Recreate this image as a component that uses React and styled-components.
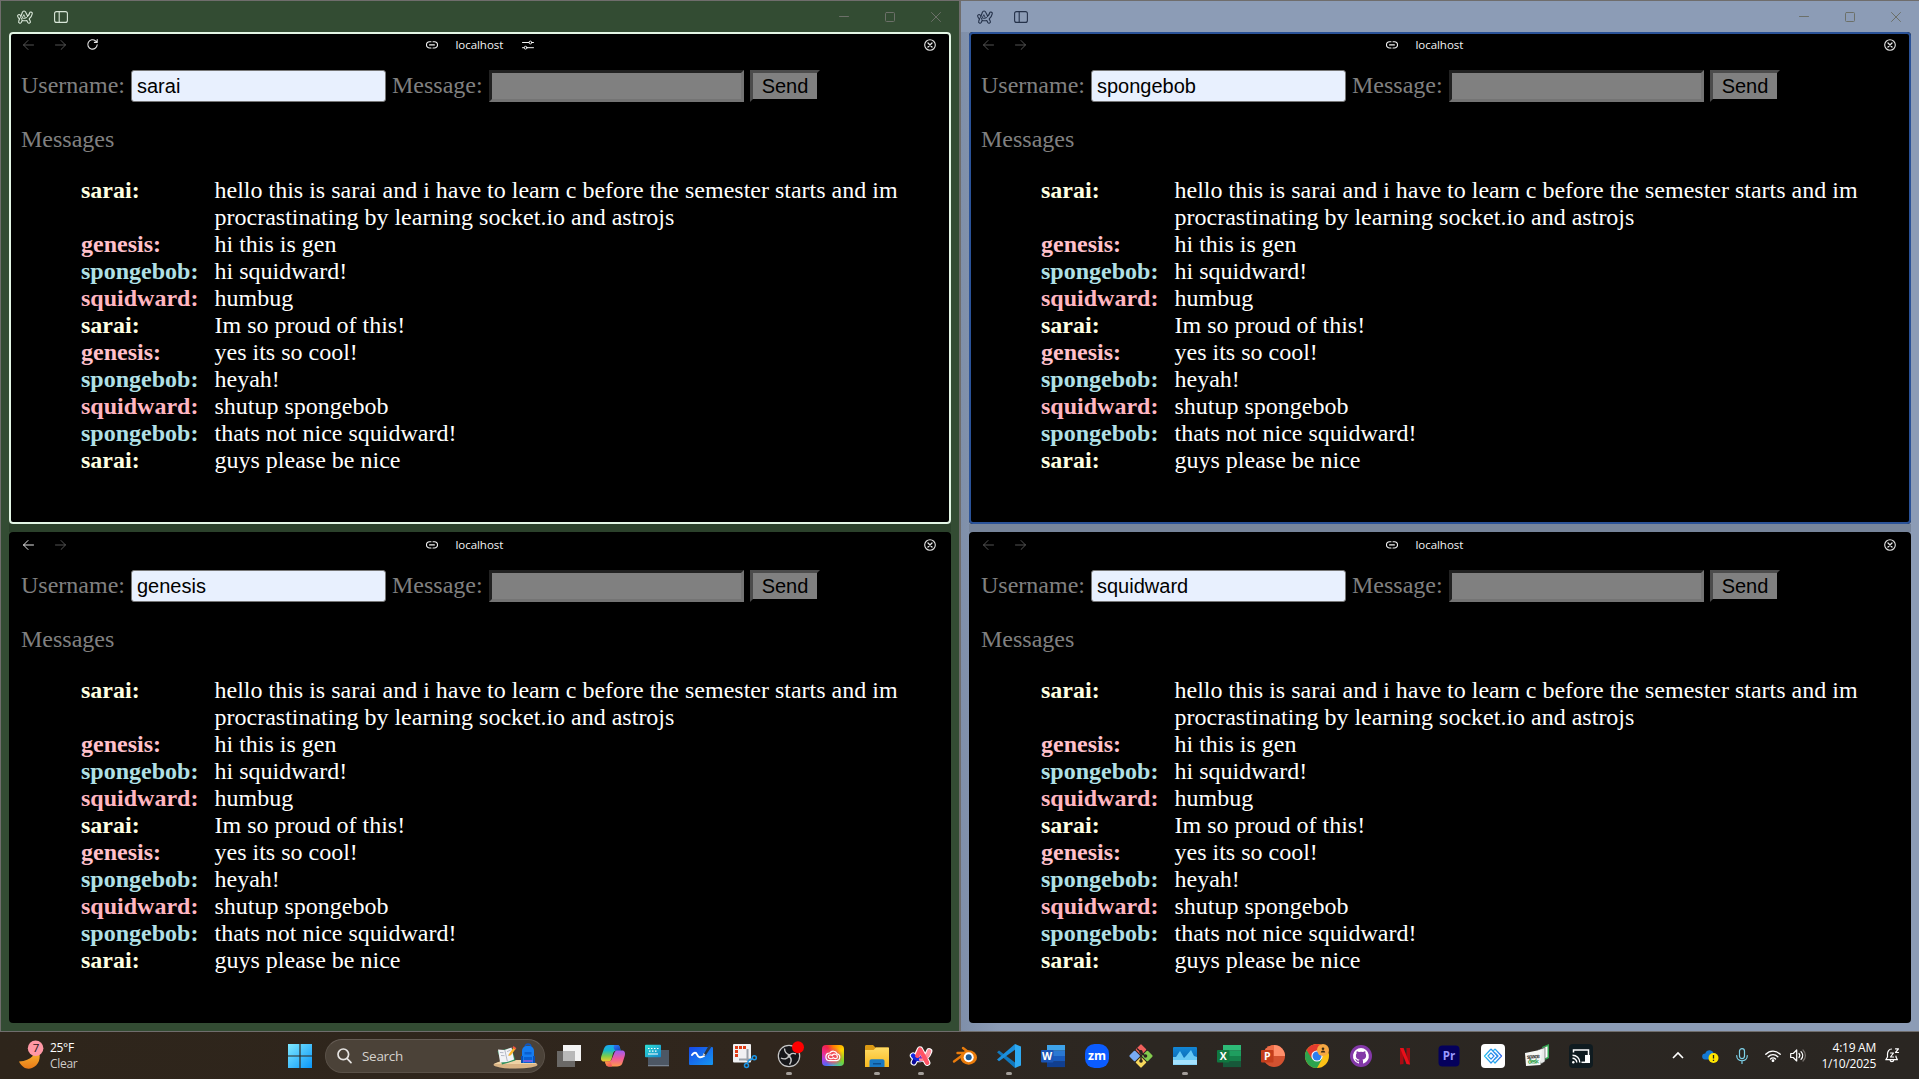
import React from "react";
import styled, { createGlobalStyle } from "styled-components";

const GlobalStyle = createGlobalStyle`
  * { box-sizing: border-box; }
  html, body { margin: 0; padding: 0; background: #000; overflow: hidden; }
  svg { display: block; flex: none; overflow: visible; }
`;

const uiFont = `"Open Sans", "Noto Sans", sans-serif`;
const serif = `"Liberation Serif", "Times New Roman", serif`;
const sans = `"Liberation Sans", Arial, sans-serif`;

const Desktop = styled.div`
  width: 1919px;
  height: 1079px;
  display: flex;
  flex-direction: column;
  background: #000;
`;

const Windows = styled.div`
  display: grid;
  grid-template-columns: 960px 959px;
  height: 1032px;
`;

const BrowserWindow = styled.section`
  display: flex;
  flex-direction: column;
  background: ${(p) => p.$bg};
  border: 1px solid #6f6d6c;
  border-right-width: ${(p) => (p.$flush ? 0 : 1)}px;
`;

const TitleBar = styled.header`
  height: 31px;
  flex: none;
  display: flex;
  align-items: center;
  padding-left: 16px;
  gap: 21px;
  color: ${(p) => p.$color};
`;

const WindowControls = styled.div`
  margin-left: auto;
  display: flex;
  color: #6c7069;
`;

const ControlButton = styled.span`
  width: 46px;
  height: 30px;
  display: flex;
  align-items: center;
  justify-content: center;
`;

const PaneStack = styled.div`
  flex: 1;
  display: grid;
  grid-template-rows: 492px 491px;
  row-gap: 8px;
  padding: 0 8px 8px;
  background: linear-gradient(${(p) => p.$gap}, ${(p) => p.$gap}) 8px 492px / 942px 8px no-repeat,
    ${(p) => p.$edge};
`;

const PaneFrame = styled.article`
  display: flex;
  flex-direction: column;
  background: #000;
  border-radius: 4px;
  box-shadow: ${(p) => (p.$outline ? `inset 0 0 0 2px ${p.$outline}` : "none")};
`;

const PaneBar = styled.div`
  height: 25px;
  flex: none;
  display: grid;
  grid-template-columns: 1fr auto 1fr;
  align-items: center;
  padding: 0 15px 0 14px;
  color: #e4e4e4;
`;

const NavGroup = styled.div`
  display: flex;
  align-items: center;
  gap: 21px;
`;

const NavIcon = styled.span`
  width: 11px;
  display: flex;
  justify-content: center;
  opacity: ${(p) => (p.$dim ? 0.36 : 1)};
`;

const Address = styled.div`
  display: flex;
  align-items: center;
  gap: 18px;
  width: 108px;
  font: 11.5px/16px ${uiFont};
  color: #f4f4f4;
`;

const Host = styled.span`
  width: 48px;
  white-space: nowrap;
  letter-spacing: -0.05px;
`;

const BarEnd = styled.div`
  display: flex;
  justify-content: flex-end;
`;

const Page = styled.main`
  padding: 13px 12px 0;
  font: 24px/27px ${serif};
  color: #808080;
`;

const Form = styled.div`
  display: flex;
  align-items: center;
  height: 32px;
`;

const Label = styled.label`
  width: ${(p) => p.$w}px;
  padding-bottom: 1px;
  white-space: nowrap;
`;

const NameInput = styled.input`
  width: 255px;
  height: 32px;
  margin: 0 6px 0 0;
  padding: 0 5px;
  border: 1px solid #767676;
  border-radius: 3px;
  outline: none;
  background: #e8f0fe;
  color: #000;
  font: 20px ${sans};
`;

const MessageInput = styled.input`
  width: 255px;
  height: 32px;
  margin: 0 6px 0 0;
  padding: 0 3px;
  border: 3px solid;
  border-color: #222 #747474 #747474 #222;
  outline: none;
  background: #808080;
`;

const SendButton = styled.button`
  width: 70px;
  height: 32px;
  padding: 0;
  border: 3px solid;
  border-color: #4c4c4c #000 #000 #4c4c4c;
  background: #808080;
  color: #000;
  font: 20px ${sans};
`;

const Heading = styled.p`
  margin: 24px 0;
`;

const Log = styled.dl`
  margin: 0 0 0 60px;
  width: 840px;
  display: grid;
  grid-template-columns: 133.5px 1fr;
  grid-auto-rows: auto;
`;

const Author = styled.dt`
  font-weight: bold;
  color: ${(p) => p.$color};
`;

const Message = styled.dd`
  margin: 0;
  width: 690px;
  color: #fff;
`;

/* Taskbar */

const Taskbar = styled.footer`
  height: 47px;
  display: flex;
  align-items: center;
  background: linear-gradient(90deg, #2e251b 0%, #30261d 40%, #2c2722 60%, #2a2622 100%);
  font: 12px/16px ${uiFont};
  color: #fff;
`;

const Weather = styled.div`
  width: 267px;
  padding-left: 19px;
  display: flex;
  align-items: center;
  gap: 4px;
  letter-spacing: -0.3px;
`;

const WeatherText = styled.div`
  span { display: block; line-height: 16px; }
  span + span { color: #cfccc9; }
`;

const StartButton = styled.div`
  width: 58px;
  padding-left: 21px;
`;

const SearchBox = styled.div`
  width: 220px;
  height: 34px;
  display: flex;
  align-items: center;
  padding: 0 6px 0 11px;
  border-radius: 17px;
  border: 1px solid #5a5148;
  border-top-color: #655c54;
  background: #4b4238;
  color: #d5d2ce;
  font-size: 13.5px;
  letter-spacing: -0.3px;
`;

const SearchText = styled.span`
  margin-left: 10px;
  flex: 1;
`;

const Apps = styled.div`
  display: flex;
  margin-left: 2px;
`;

const AppSlot = styled.div`
  position: relative;
  width: 44px;
  height: 47px;
  display: flex;
  align-items: center;
  justify-content: center;
`;

const Running = styled.i`
  position: absolute;
  left: 19px;
  bottom: 4px;
  width: 6px;
  height: 3px;
  border-radius: 2px;
  background: #a39e99;
`;

const Tray = styled.div`
  margin-left: auto;
  display: flex;
  align-items: center;
`;

const TrayIcon = styled.span`
  width: ${(p) => p.$w}px;
  display: flex;
  justify-content: center;
`;

const Clock = styled.div`
  width: 68px;
  text-align: right;
  letter-spacing: -0.25px;
  white-space: nowrap;
`;

/* Browser glyphs */

const Line = ({ w, h, sw = 1, children }) => (
  <svg width={w} height={h} viewBox={`0 0 ${w} ${h}`} fill="none" stroke="currentColor" strokeWidth={sw} strokeLinecap="round" strokeLinejoin="round">
    {children}
  </svg>
);

const ArcMark = () => (
  <Line w={16} h={14} sw={1.1}>
    <path d="M5.4 2.200C6.100.6 8 .6 8.700 2.200L10.700 6.200C11.700 5.300 12.300 4.200 12.600 3 13 1.500 15.600 1.900 15.300 3.600 14.900 5.600 13.800 7.500 12.200 8.900L13.300 11.200C14 12.900 11.700 14 10.800 12.500L9.800 10.500C8.300 10.900 6.700 10.900 5.200 10.500L4.200 12.500C3.300 14 1 12.900 1.700 11.300L2.500 9C1.700 8.300 1 7.400.7 6.400.1 4.700 2.400 3.800 3.200 5.300L3.900 6.300Z" />
    <path d="M7 5 8.500 8.200C7.500 8.500 6.500 8.400 5.500 8.100ZM3.900 6.300 2.500 9M10.700 6.200 9.200 8M5.200 10.500 4.300 8" strokeWidth=".9" />
  </Line>
);

const SidebarGlyph = () => (
  <Line w={14} h={12} sw={1.1}>
    <rect x=".6" y=".6" width="12.800" height="10.800" rx="2" />
    <path d="M5.200 1v10" />
  </Line>
);

const ArrowGlyph = ({ flip }) => (
  <Line w={11} h={10}>
    <path d={flip ? "M.5 5h10M6 .5 10.5 5 6 9.5" : "M10.5 5H.5M5 .5.5 5 5 9.5"} />
  </Line>
);

const ReloadGlyph = () => (
  <Line w={11} h={11} sw={1.1}>
    <path d="M10.200 5.800A4.700 4.700 0 1 1 8.600 1.900L10 3M10.200.6v2.800H7.400" />
  </Line>
);

const LinkGlyph = () => (
  <Line w={12} h={8} sw={1.1}>
    <path d="M5 .8H3.600a3.100 3.100 0 0 0 0 6.200H5M7 .8h1.400a3.100 3.100 0 0 1 0 6.200H7M3.600 3.900h4.800" />
  </Line>
);

const TuneGlyph = () => (
  <Line w={12} h={10}>
    <path d="M.5 2.500h6.400M10 2.500h1.500M.5 7.700H2M5.200 7.700h6.300" />
    <circle cx="8.400" cy="2.500" r="1.400" />
    <circle cx="3.600" cy="7.700" r="1.400" />
  </Line>
);

const CloseCircleGlyph = () => (
  <Line w={12} h={12} sw={1.1}>
    <circle cx="6" cy="6" r="5.300" />
    <path d="m4 4 4 4M8 4 4 8" strokeWidth="1.300" />
  </Line>
);

/* Taskbar artwork */

const Art = ({ s = 24, children }) => (
  <svg width={s} height={s} viewBox="0 0 24 24" fill="none">{children}</svg>
);

const Glyph = styled.text`
  font-family: "Open Sans", sans-serif;
  font-weight: ${(p) => (p.$light ? 400 : 700)};
  text-anchor: middle;
`;

const Grad = ({ id, stops, x2 = 0, y2 = 1 }) => (
  <linearGradient id={id} x1="0" y1="0" x2={x2} y2={y2}>
    {stops.map((c, i) => <stop key={i} offset={i / (stops.length - 1)} stopColor={c} />)}
  </linearGradient>
);

const MoonIcon = () => (
  <svg width="27" height="31" viewBox="0 0 27 31">
    <defs><Grad id="moon" stops={["#ffc93c", "#e87a17"]} /></defs>
    <path d="M14.500 6C17.500 14 13 20.500 0 21.500 3 27.500 8 30 13 28 20 25.500 22 18 20 11Z" fill="url(#moon)" />
    <circle cx="16.600" cy="8.300" r="7.800" fill="#ff98a5" />
    <Glyph x="17" y="12.400" fontSize="11.500" fill="#2b1517" $light>7</Glyph>
  </svg>
);

const StartIcon = () => (
  <Art>
    <defs><Grad id="win" stops={["#7fe9ff", "#0a96f8"]} x2={1} /></defs>
    <path d="M0 0h11.400v11.400H0zM12.600 0H24v11.400H12.600zM0 12.600h11.400V24H0zM12.600 12.600H24V24H12.600z" fill="url(#win)" />
  </Art>
);

const SearchGlyph = () => (
  <svg width="15" height="16" viewBox="0 0 15 16" fill="none" stroke="#e6e4e2" strokeWidth="1.700" strokeLinecap="round">
    <circle cx="6.300" cy="6.300" r="5.300" /><path d="m10.200 10.600 3.800 4" />
  </svg>
);

const SchoolArt = () => (
  <svg width="45" height="26" viewBox="0 0 45 26">
    <ellipse cx="22.500" cy="21.800" rx="22" ry="3.800" fill="#d9b384" />
    <path d="M1 21 10 17h28l6 4Z" fill="#efd2a4" />
    <path d="m4.500 8 14-3 4 12.500-13.500 4Z" fill="#2f8f5e" />
    <path d="m5 6.600 6.500.4 7-2.600 2.600 12-7 2.600-7 .6Z" fill="#f2f3f6" />
    <path d="m11.800 7 2.600 11.500M7 9.500l3.500.2M8 12.500l3.500.2M14 8.600l3.500-1.400M15 12.300l3.500-1.500" stroke="#a3a8b8" strokeWidth=".8" />
    <path d="m16 11 5-7 2 1.600-5.200 6.600-2.200.8Z" fill="#ffb629" /><path d="m20.600 3 2.800 2.200-1.200 1.400-2.800-2.200Z" fill="#f0563e" />
    <path d="M32 4c0-4 6-4 6 0" fill="none" stroke="#0d57c4" strokeWidth="1.300" />
    <path d="M29 8c0-7 12-7 12 0v12H29Z" fill="#157cf0" />
    <path d="M28 13h2v7h-2zM40 13h2v7h-2z" fill="#0b4fb4" />
    <path d="M31.500 9h7v2.500h-7zM31 14h8v6h-8z" fill="#0a5fd0" /><path d="M30.500 18h9" stroke="#d65cf0" strokeWidth="1" />
  </svg>
);

const TaskViewIcon = () => (
  <Art><path d="M6 1h18v16H6z" fill="#f4f4f4" /><path d="M0 7h18v16H0z" fill="#6a6866" /><path d="M6 7h12v10H6z" fill="#b9b9b9" /></Art>
);

const CopilotIcon = () => (
  <Art>
    <defs>
      <Grad id="cpA" stops={["#1ea7f2", "#17b8c9", "#7acb4a", "#f7c82b"]} />
      <Grad id="cpB" stops={["#9b5cf5", "#ef5a9c", "#ff9a4a"]} />
      <Grad id="cpC" stops={["#2f7bf5", "#1440c0"]} x2={1} />
      <Grad id="cpD" stops={["#ffa53a", "#f4436a"]} x2={1} />
    </defs>
    <path d="M8 1h8c2 0 2.600 1.200 3 3l.6 2.600h-4c-2 0-3 1-3.600 3L10.500 15C10 17 9 17.500 7 17.500H3c-3 0-3.500-2.500-2.600-5.500L3 4.500C4 2 5.500 1 8 1Z" fill="url(#cpA)" />
    <path d="M13 1h3c2 0 2.600 1.200 3 3l.6 2.600h-4c-2 0-2.600-1-3-3Z" fill="url(#cpC)" />
    <path d="M16 22.500H8c-2 0-3-1.200-3.400-3L4 17.500h3.500c2 0 3-1 3.500-3L13.300 9c.6-2 1.700-2.500 3.700-2.500h4c3 0 3.500 2.500 2.700 5.500l-2.400 7.500c-1 2.200-2.800 3-5.300 3Z" fill="url(#cpB)" />
    <path d="M11 22.500H8c-2 0-3-1.200-3.400-3L4 17.500h3.500c2 0 3 1 3 3Z" fill="url(#cpD)" />
  </Art>
);

const KeyboardIcon = () => (
  <Art>
    <defs><Grad id="kb" stops={["#2ee0d6", "#1486c9"]} x2={1} /></defs>
    <path d="M3 6h21v16H3z" fill="#4d5764" /><path d="M3 21h21v1.300H3z" fill="#788391" />
    <rect width="16" height="12.500" y=".8" rx=".8" fill="url(#kb)" />
    <path d="M3 4.500h1.500M6 4.500h1.500M9 4.500h1.500M12 4.500h1.500M4 7.200h1.500M7 7.200h1.500M10 7.200h1.500M3 10h10" stroke="#fff" strokeWidth="1.200" />
  </Art>
);

const WhiteboardIcon = () => (
  <Art>
    <defs><Grad id="wb" stops={["#1747e8", "#1597f0"]} x2={1} /></defs>
    <rect y="3" width="24" height="18" rx="1" fill="url(#wb)" />
    <path d="M3 11c2-3 4-3 5-.5s3 4 7 1.500" stroke="#fff" strokeWidth="2" strokeLinecap="round" />
    <path d="m14 11.500 6-10.500 2.600 1.400-6 9Z" fill="#2b3440" /><path d="m14 11.800.5-2.800 2 2Z" fill="#ddd" />
  </Art>
);

const SnipIcon = () => (
  <Art>
    <rect x="0" y="0" width="18" height="18.500" rx="1" fill="#f0f1f3" />
    <path d="M2 2h3v3H2zM6 2h3v3H6zM10 2h3v3h-3zM2 6h3v3H2zM2 10h3v3H2z" fill="#e03c16" />
    <path d="M14.500 5v12M6 15.500h13" stroke="#9aa1a9" strokeWidth="2" />
    <circle cx="21.300" cy="13.700" r="2" stroke="#1a97e8" strokeWidth="1.500" /><circle cx="13.500" cy="21.500" r="2" stroke="#1a97e8" strokeWidth="1.500" />
    <path d="m19.500 14.500-4 2-1.200 3" stroke="#1a97e8" strokeWidth="1.500" />
  </Art>
);

const ObsIcon = () => (
  <Art>
    <circle cx="12" cy="12" r="10.700" fill="#161619" stroke="#c8c8c8" strokeWidth="1.200" />
    <path d="M7.500 4.500c.2 4 2.300 5.700 5 6.500M19 10c-3.500-1.400-6-.2-7 2.500M12.500 20.500C15 17 14.300 14 12 12M4 14c3 1.800 6.500.8 8-2" stroke="#c8c8c8" strokeWidth="1.400" />
    <circle cx="12" cy="12" r="1.500" fill="#c8c8c8" /><circle cx="21" cy="3.200" r="6" fill="#f00" />
  </Art>
);

const CloudBox = styled.div`
  width: 22px;
  height: 21px;
  border-radius: 4px;
  display: flex;
  align-items: center;
  justify-content: center;
  background: radial-gradient(circle at 50% 55%, #f04f5b 0 28%, transparent 62%),
    conic-gradient(from 0deg, #ff7a00, #ffd400, #7bd42a, #28b8f0 50%, #5366f5, #b63be8, #f02a8c, #f0224a, #ff7a00);
`;

const CreativeCloudIcon = () => (
  <CloudBox>
    <svg width="16" height="12" viewBox="0 0 17 13" fill="none" stroke="#fff" strokeWidth="1.250">
      <path d="M5 11.500h7.500a3.800 3.800 0 0 0 .3-7.500C11.500.8 7 .3 5 3.300 2 3.300.8 5.500.8 7.500c0 2.400 1.900 4 4.200 4Z" />
      <path d="M8.500 8.700C7 10 3.400 9.500 3.400 7.200c0-2.500 3.600-2.600 5-.6M7.500 5.500c2-1.700 5.800-1.200 5.800 1.800 0 2.700-3.500 2.400-5 .6" />
    </svg>
  </CloudBox>
);

const FolderIcon = () => (
  <Art>
    <defs><Grad id="fold" stops={["#ffdc66", "#f8b91f"]} /></defs>
    <path d="M0 2.500C0 1.500.5 1 1.500 1H8l2.500 2.500H23c.7 0 1 .4 1 1V9H0Z" fill="#dc9a14" />
    <path d="M0 6h8.500l2.500-2.500h12c.7 0 1 .4 1 1V23H0Z" fill="url(#fold)" />
    <path d="M4.500 23v-5.500c0-1.500.7-2.200 2-2.200h11c1.300 0 2 .7 2 2.200V23Z" fill="#1979c4" /><path d="M8 19h8v1.500H8z" fill="#0c4f8e" />
  </Art>
);

const ArcIcon = () => (
  <Art>
    <g strokeLinecap="round" strokeLinejoin="round">
      <path d="M4.800 18.300 11 5.500 18.200 18.700M4 11.600C8 17.500 17.500 15 20.200 7.200" stroke="#fff" strokeWidth="6.400" />
      <path d="M11 8 8 16h7Z" fill="#fff" />
      <path d="M4.800 18.300 7 14" stroke="#0a0896" strokeWidth="4.200" />
      <path d="M4 11.600C6 14.500 9 15.500 12 15.200" stroke="#1427e0" strokeWidth="4.400" />
      <path d="M12 15.200C16 14.800 19 11.500 20.200 7.200" stroke="#ff8f9c" strokeWidth="4.200" />
      <path d="M8.300 11.800 11 5.500 18.200 18.700" stroke="#ff5365" strokeWidth="4.400" />
      <path d="M11.300 11 10 14.500h3.300Z" fill="#7a2ac4" />
    </g>
  </Art>
);

const BlenderIcon = () => (
  <Art>
    <path d="M1 17.500 12.500 9H4.500M10 4l7 5.500" stroke="#ea7c0c" strokeWidth="2.400" strokeLinecap="round" strokeLinejoin="round" />
    <ellipse cx="15.700" cy="13.500" rx="8.300" ry="7.200" fill="#ea7c0c" />
    <circle cx="15.700" cy="13.300" r="5" fill="#fff" /><circle cx="15.700" cy="13.300" r="3" fill="#1d5b96" />
  </Art>
);

const CodeIcon = () => (
  <Art>
    <path d="M18 0v24l6-2.600V2.600Z" fill="#2eaaf2" />
    <path d="M0 8.200 2 6.500 18 18.500V24Z" fill="#1178bd" /><path d="M0 15.500 2 17.300 18 5.800V0Z" fill="#1b8fdc" />
  </Art>
);

const OfficeIcon = ({ letter, bands, badge, round }) => (
  <Art>
    {round ? (
      <>
        <circle cx="13" cy="12" r="11" fill={bands[2]} /><path d="M13 1a11 11 0 0 1 11 11H13Z" fill={bands[0]} /><path d="M2 12A11 11 0 0 1 13 1v11Z" fill={bands[1]} />
      </>
    ) : bands.map((c, i) => <rect key={i} x="6" y={1 + i * 5.5} width="18" height="5.600" fill={c} />)}
    <rect x="0" y="6" width="12.500" height="12.500" rx="1" fill={badge} />
    <Glyph x="6.200" y="16" fontSize="10.500" fill="#fff">{letter}</Glyph>
  </Art>
);

const ZoomIcon = () => (
  <Art><rect width="24" height="24" rx="9.500" fill="#0b5cff" /><Glyph x="12" y="16" fontSize="12.500" fill="#fff" textLength="18" lengthAdjust="spacingAndGlyphs">zm</Glyph></Art>
);

const GitIcon = () => (
  <Art>
    <g transform="rotate(45 12 12)">
      <rect x="3.500" y="3.500" width="8" height="8" rx="1" fill="#f0605c" /><rect x="12.500" y="3.500" width="8" height="8" rx="1" fill="#83cc4e" />
      <rect x="3.500" y="12.500" width="8" height="8" rx="1" fill="#78aaf5" /><rect x="12.500" y="12.500" width="8" height="8" rx="1" fill="#f8d95c" />
    </g>
    <path d="M12 6v12M8 4.500 16 12" stroke="#2a2420" strokeWidth="1.400" />
    <circle cx="12" cy="8" r="1.800" fill="#2a2420" /><circle cx="12" cy="17" r="1.800" fill="#2a2420" /><circle cx="16.500" cy="12" r="1.800" fill="#2a2420" />
  </Art>
);

const MonitorIcon = () => (
  <Art>
    <defs><Grad id="mon" stops={["#1287d6", "#0b5fa8"]} /></defs>
    <rect y="3" width="24" height="18" rx="1" fill="url(#mon)" />
    <path d="M0 13h3l4-6 4 7 2-2 5-6 3 6 3 1v8H0Z" fill="#67c8f5" /><path d="M0 16h24v4.500H0z" fill="#a5e2ff" />
  </Art>
);

const ChromeIcon = () => (
  <Art>
    <circle cx="12" cy="12" r="12" fill="#fbc116" />
    <path d="M12 12 1.600 6A12 12 0 0 0 12 24l5-9Z" fill="#2da44e" /><path d="M1.600 6A12 12 0 0 1 22.400 6H12l-5 9Z" fill="#e33b2e" />
    <circle cx="12" cy="12" r="5.600" fill="#fff" /><circle cx="12" cy="12" r="4.500" fill="#2c7ef0" />
    <circle cx="18" cy="6" r="6" fill="#f5a742" /><circle cx="18" cy="4.800" r="1.300" fill="#3a2a14" /><path d="M15.800 8.500c0-2.700 4.400-2.700 4.400 0Z" fill="#3a2a14" />
  </Art>
);

const GithubIcon = () => (
  <Art>
    <circle cx="12" cy="12" r="11" fill="#8338a8" />
    <path d="M12 4a8 8 0 0 0-2.500 15.600c.4 0 .5-.2.5-.4v-1.500c-2.200.5-2.700-1-2.700-1-.4-.9-.9-1.200-.9-1.200-.7-.5.1-.5.1-.5.8.1 1.200.8 1.200.8.7 1.200 1.900.9 2.300.7.1-.5.3-.9.5-1.100-1.800-.2-3.600-.9-3.600-4 0-.9.300-1.600.8-2.100-.1-.2-.4-1 .1-2.100 0 0 .7-.2 2.200.8a7.600 7.600 0 0 1 4 0c1.500-1 2.200-.8 2.200-.8.4 1.100.2 1.900.1 2.100.5.500.8 1.200.8 2.100 0 3.100-1.900 3.800-3.700 4 .3.3.6.8.6 1.500v2.200c0 .2.100.5.600.4A8 8 0 0 0 12 4Z" fill="#fff" />
  </Art>
);

const NetflixIcon = () => (
  <Art><path d="M7 4h3.500v16L7 20.500ZM13.500 4H17v16.500l-3.500-.5Z" fill="#a90b12" /><path d="M7 4h3.500L17 20.500 13.500 20Z" fill="#ea0f1a" /></Art>
);

const PremiereIcon = () => (
  <Art><rect x="1.500" y="1.500" width="21" height="21" rx="4" fill="#04005c" /><Glyph x="12" y="15.500" fontSize="11.500" fill="#9999ff">Pr</Glyph></Art>
);

const DiamondIcon = () => (
  <Art>
    <defs><Grad id="dia" stops={["#27c4ee", "#2b5fe8"]} x2={1} y2={0} /></defs>
    <rect width="24" height="24" rx="4" fill="#fff" />
    <g stroke="url(#dia)" strokeWidth="1.200" strokeLinejoin="round">
      <path d="m10 5-6.500 7 6.500 7 2-2.200M10 5l6.500 7-4.500 4.800M10 8.800 7 12l3 3.200 3-3.200Z" />
      <path d="m14 5 6.500 7-6.500 7-2-2.200M14 5l-2 2.200M14 8.800l3 3.200-3 3.200" />
    </g>
  </Art>
);

const SpacedeskIcon = () => (
  <Art>
    <path d="m17 3 7-3v14l-4 2Z" fill="#35a853" /><path d="m18.500 4 4-1.700v10.700l-3 1.500Z" fill="#fff" />
    <path d="m13 6 7-2.500v14L16 20Z" fill="#e9ecea" stroke="#444" strokeWidth=".6" />
    <path d="m0 9 17-3.500-1.500 15.500L1 22Z" fill="#f5f7f5" />
    <Glyph x="8.500" y="14.500" fontSize="6" fill="#444" transform="rotate(-5 8 14)" textLength="13">space</Glyph>
    <Glyph x="8.500" y="19.500" fontSize="6" fill="#31a04b" transform="rotate(-3 8 19)" textLength="11">desk</Glyph>
  </Art>
);

const CastIcon = () => (
  <Art>
    <rect width="24" height="24" rx="4" fill="#0f1b20" />
    <path d="M4.500 8.500V6h15v5" stroke="#fff" strokeWidth="1.500" /><rect x="16" y="11" width="5" height="8" fill="#fff" /><path d="M12.500 18.300h4" stroke="#fff" strokeWidth="1.500" />
    <path d="M3.500 11.200a7.300 7.300 0 0 1 7.300 7.300M3.500 14.300a4.300 4.300 0 0 1 4.300 4.300" stroke="#fff" strokeWidth="1.400" /><circle cx="4.300" cy="18.200" r="1.200" fill="#fff" />
  </Art>
);

const apps = [
  { icon: <TaskViewIcon /> },
  { icon: <CopilotIcon /> },
  { icon: <KeyboardIcon /> },
  { icon: <WhiteboardIcon /> },
  { icon: <SnipIcon /> },
  { icon: <ObsIcon />, running: true },
  { icon: <CreativeCloudIcon /> },
  { icon: <FolderIcon />, running: true },
  { icon: <ArcIcon />, running: true },
  { icon: <BlenderIcon /> },
  { icon: <CodeIcon />, running: true },
  { icon: <OfficeIcon letter="W" bands={["#3ea3ea", "#2a78d2", "#185abd", "#103f91"]} badge="#1a55b5" /> },
  { icon: <ZoomIcon /> },
  { icon: <GitIcon /> },
  { icon: <MonitorIcon />, running: true },
  { icon: <OfficeIcon letter="X" bands={["#2dba77", "#1f9e5f", "#15804a", "#17593a"]} badge="#107840" /> },
  { icon: <OfficeIcon letter="P" round bands={["#ff8f6b", "#ed6c47", "#d35230"]} badge="#c43e1c" /> },
  { icon: <ChromeIcon /> },
  { icon: <GithubIcon /> },
  { icon: <NetflixIcon /> },
  { icon: <PremiereIcon /> },
  { icon: <DiamondIcon /> },
  { icon: <SpacedeskIcon /> },
  { icon: <CastIcon /> },
];

const nameColors = {
  sarai: "#ffffe0",
  genesis: "#ffc0cb",
  spongebob: "#b0e0e6",
  squidward: "#ffb6c1",
};

const messages = [
  ["sarai", "hello this is sarai and i have to learn c before the semester starts and im procrastinating by learning socket.io and astrojs"],
  ["genesis", "hi this is gen"],
  ["spongebob", "hi squidward!"],
  ["squidward", "humbug"],
  ["sarai", "Im so proud of this!"],
  ["genesis", "yes its so cool!"],
  ["spongebob", "heyah!"],
  ["squidward", "shutup spongebob"],
  ["spongebob", "thats not nice squidward!"],
  ["sarai", "guys please be nice"],
];

function Pane({ user, outline, canGoBack, active }) {
  return (
    <PaneFrame $outline={outline}>
      <PaneBar>
        <NavGroup>
          <NavIcon $dim={!canGoBack}><ArrowGlyph /></NavIcon>
          <NavIcon $dim><ArrowGlyph flip /></NavIcon>
          {active && <NavIcon><ReloadGlyph /></NavIcon>}
        </NavGroup>
        <Address>
          <LinkGlyph />
          <Host>localhost</Host>
          {active && <TuneGlyph />}
        </Address>
        <BarEnd><CloseCircleGlyph /></BarEnd>
      </PaneBar>
      <Page>
        <Form>
          <Label $w={110}>Username:</Label>
          <NameInput defaultValue={user} />
          <Label $w={97}>Message:</Label>
          <MessageInput />
          <SendButton>Send</SendButton>
        </Form>
        <Heading>Messages</Heading>
        <Log>
          {messages.map(([who, text], i) => (
            <React.Fragment key={i}>
              <Author $color={nameColors[who]}>{who}:</Author>
              <Message>{text}</Message>
            </React.Fragment>
          ))}
        </Log>
      </Page>
    </PaneFrame>
  );
}

function Browser({ bg, gap, edge, iconColor, flush, children }) {
  return (
    <BrowserWindow $bg={bg} $flush={flush}>
      <TitleBar $color={iconColor}>
        <ArcMark />
        <SidebarGlyph />
        <WindowControls>
          <ControlButton><Line w={10} h={10}><path d="M.5 4.500h9" /></Line></ControlButton>
          <ControlButton><Line w={10} h={10}><rect x=".5" y=".5" width="9" height="9" rx="1" /></Line></ControlButton>
          <ControlButton><Line w={10} h={10}><path d="m.5.5 9 9M9.500.5l-9 9" /></Line></ControlButton>
        </WindowControls>
      </TitleBar>
      <PaneStack $gap={gap} $edge={edge}>{children}</PaneStack>
    </BrowserWindow>
  );
}

export default function App() {
  return (
    <Desktop>
      <GlobalStyle />
      <Windows>
        <Browser bg="#334c33" gap="#2b412b" edge="#334c33" iconColor="#d8e6d8">
          <Pane user="sarai" outline="#e3f6e5" active />
          <Pane user="genesis" canGoBack />
        </Browser>
        <Browser bg="#8c9cb6" gap="#77859b" edge="linear-gradient(90deg, #7f8fa9, #8c9cb6 40px)" iconColor="#25324a" flush>
          <Pane user="spongebob" outline="#2a5298" />
          <Pane user="squidward" />
        </Browser>
      </Windows>
      <Taskbar>
        <Weather>
          <MoonIcon />
          <WeatherText><span>25°F</span><span>Clear</span></WeatherText>
        </Weather>
        <StartButton><StartIcon /></StartButton>
        <SearchBox>
          <SearchGlyph />
          <SearchText>Search</SearchText>
          <SchoolArt />
        </SearchBox>
        <Apps>
          {apps.map((app, i) => (
            <AppSlot key={i}>{app.icon}{app.running && <Running />}</AppSlot>
          ))}
        </Apps>
        <Tray>
          <TrayIcon $w={32}>
            <svg width="12" height="7" viewBox="0 0 12 7" fill="none" stroke="#fff" strokeWidth="1.600"><path d="m1 6 5-5 5 5" /></svg>
          </TrayIcon>
          <TrayIcon $w={32}>
            <svg width="16" height="14" viewBox="0 0 16 14">
              <path d="M3 10.500a3 3 0 0 1 .3-6C4.300.5 10 0 11.500 4c3 0 3.500 6 .5 6.500Z" fill="#1479d4" />
              <circle cx="11.500" cy="9" r="5" fill="#ffe500" /><path d="M11.500 6v3.500M11.500 10.800v1.200" stroke="#222" strokeWidth="1.300" />
            </svg>
          </TrayIcon>
          <TrayIcon $w={32}>
            <svg width="12" height="16" viewBox="0 0 12 16" fill="none" stroke="#7fd3ea" strokeWidth="1.200" strokeLinecap="round">
              <rect x="3.500" y=".6" width="5" height="10" rx="2.500" /><path d="M.7 7.500c0 7 10.600 7 10.600 0M6 12.800v2.600" />
            </svg>
          </TrayIcon>
          <TrayIcon $w={30}>
            <svg width="16" height="12" viewBox="0 0 16 12" fill="none" stroke="#fff" strokeWidth="1.400" strokeLinecap="round">
              <path d="M.8 4.300c4-4.200 10.400-4.200 14.400 0M3.200 6.700c2.700-2.800 6.900-2.800 9.600 0M5.500 9c1.500-1.500 3.500-1.500 5 0" /><circle cx="8" cy="10.700" r=".7" fill="#fff" />
            </svg>
          </TrayIcon>
          <TrayIcon $w={20}>
            <svg width="16" height="13" viewBox="0 0 16 13" fill="none" stroke="#fff" strokeWidth="1.200" strokeLinecap="round" strokeLinejoin="round">
              <path d="M.7 4.500h2.500L6.700 1v11L3.200 8.500H.7ZM9 4.500c1 1.200 1 2.800 0 4M11 2.700c2.200 2.300 2.200 5.300 0 7.600" /><path d="M13 1c3.200 3.200 3.200 7.800 0 11" stroke="#77726d" />
            </svg>
          </TrayIcon>
          <Clock>4:19 AM<br />1/10/2025</Clock>
          <TrayIcon $w={33}>
            <svg width="15" height="15" viewBox="0 0 15 15" fill="none" stroke="#fff" strokeWidth="1.200" strokeLinecap="round" strokeLinejoin="round">
              <path d="M6.500 1C4 1 2.500 3.500 2.500 6v3L.8 11.700h11.600L11 9V8M5 12c.3 2.200 3.500 2.200 3.800 0M5.500 5h3l-3 4h3M10.500.8h3l-3 3.700h3" />
            </svg>
          </TrayIcon>
          <TrayIcon $w={10} />
        </Tray>
      </Taskbar>
    </Desktop>
  );
}
